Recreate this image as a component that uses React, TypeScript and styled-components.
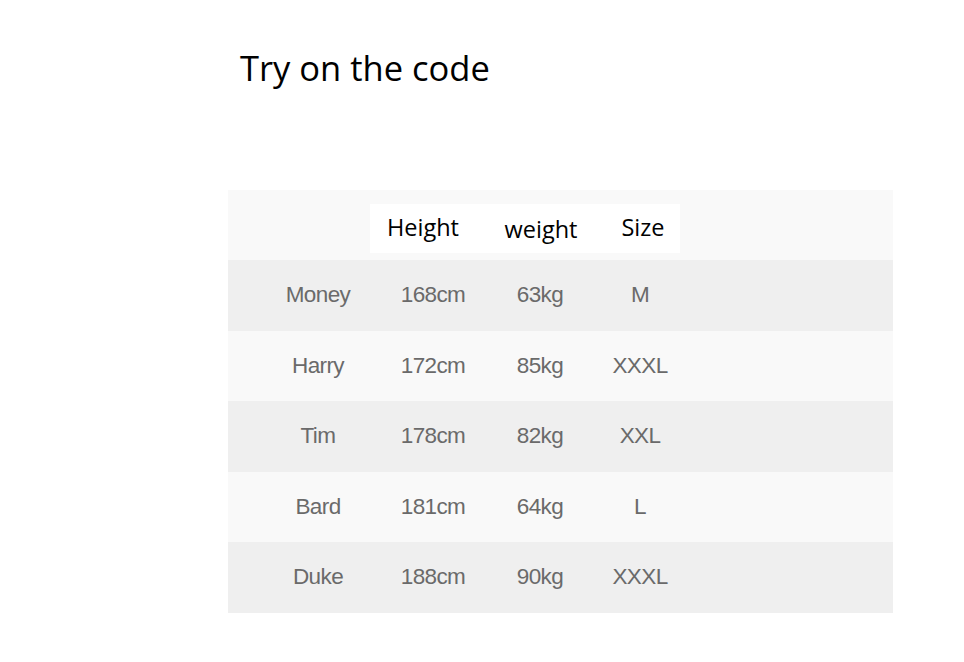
import styled, { createGlobalStyle } from 'styled-components';

const GlobalStyle = createGlobalStyle`
    html, body {
        margin: 0;
        padding: 0;
        background: #ffffff;
    }
`;

interface SizeRow {
    name: string;
    height: string;
    weight: string;
    size: string;
}

const rows: SizeRow[] = [
    { name: 'Money', height: '168cm', weight: '63kg', size: 'M' },
    { name: 'Harry', height: '172cm', weight: '85kg', size: 'XXXL' },
    { name: 'Tim', height: '178cm', weight: '82kg', size: 'XXL' },
    { name: 'Bard', height: '181cm', weight: '64kg', size: 'L' },
    { name: 'Duke', height: '188cm', weight: '90kg', size: 'XXXL' },
];

const Page = styled.div`
    width: 964px;
    height: 662px;
    padding-top: 46px;
    box-sizing: border-box;
    background: #ffffff;
`;

const Title = styled.h1`
    margin: 0 0 0 240px;
    font-family: 'Open Sans', 'Noto Sans', sans-serif;
    font-weight: 400;
    font-size: 34.5px;
    line-height: 44px;
    color: #000000;
`;

const Table = styled.div`
    margin: 100px 0 0 228px;
    width: 665px;
    display: flex;
    flex-direction: column;
`;

const HeaderRow = styled.div`
    height: 70px;
    background: #f9f9f9;
    padding: 14px 0 0 142px;
    box-sizing: border-box;
`;

const HeaderBox = styled.div`
    width: 310px;
    height: 49px;
    background: #ffffff;
    display: grid;
    grid-template-columns: 106px 130px 74px;
    align-items: center;
`;

const HeaderLabel = styled.span<{ $drop?: boolean }>`
    text-align: center;
    font-family: 'Open Sans', 'Noto Sans', sans-serif;
    font-size: 23.5px;
    line-height: 30px;
    color: #000000;
    margin-top: ${({ $drop }) => ($drop ? '1px' : '-3px')};
`;

const Row = styled.div<{ $shade: boolean }>`
    height: 70.5px;
    background: ${({ $shade }) => ($shade ? '#efefef' : '#f9f9f9')};
    display: grid;
    grid-template-columns: 120px 110px 104px 96px;
    padding-left: 30px;
    align-items: center;
`;

const Cell = styled.span`
    text-align: center;
    font-family: 'Liberation Sans', Arial, sans-serif;
    font-size: 22.5px;
    letter-spacing: -0.6px;
    color: #6a6a6a;
`;

export default function App() {
    return (
        <Page>
            <GlobalStyle />
            <Title>Try on the code</Title>
            <Table>
                <HeaderRow>
                    <HeaderBox>
                        <HeaderLabel>Height</HeaderLabel>
                        <HeaderLabel $drop>weight</HeaderLabel>
                        <HeaderLabel>Size</HeaderLabel>
                    </HeaderBox>
                </HeaderRow>
                {rows.map((row, i) => (
                    <Row key={row.name} $shade={i % 2 === 0}>
                        <Cell>{row.name}</Cell>
                        <Cell>{row.height}</Cell>
                        <Cell>{row.weight}</Cell>
                        <Cell>{row.size}</Cell>
                    </Row>
                ))}
            </Table>
        </Page>
    );
}
